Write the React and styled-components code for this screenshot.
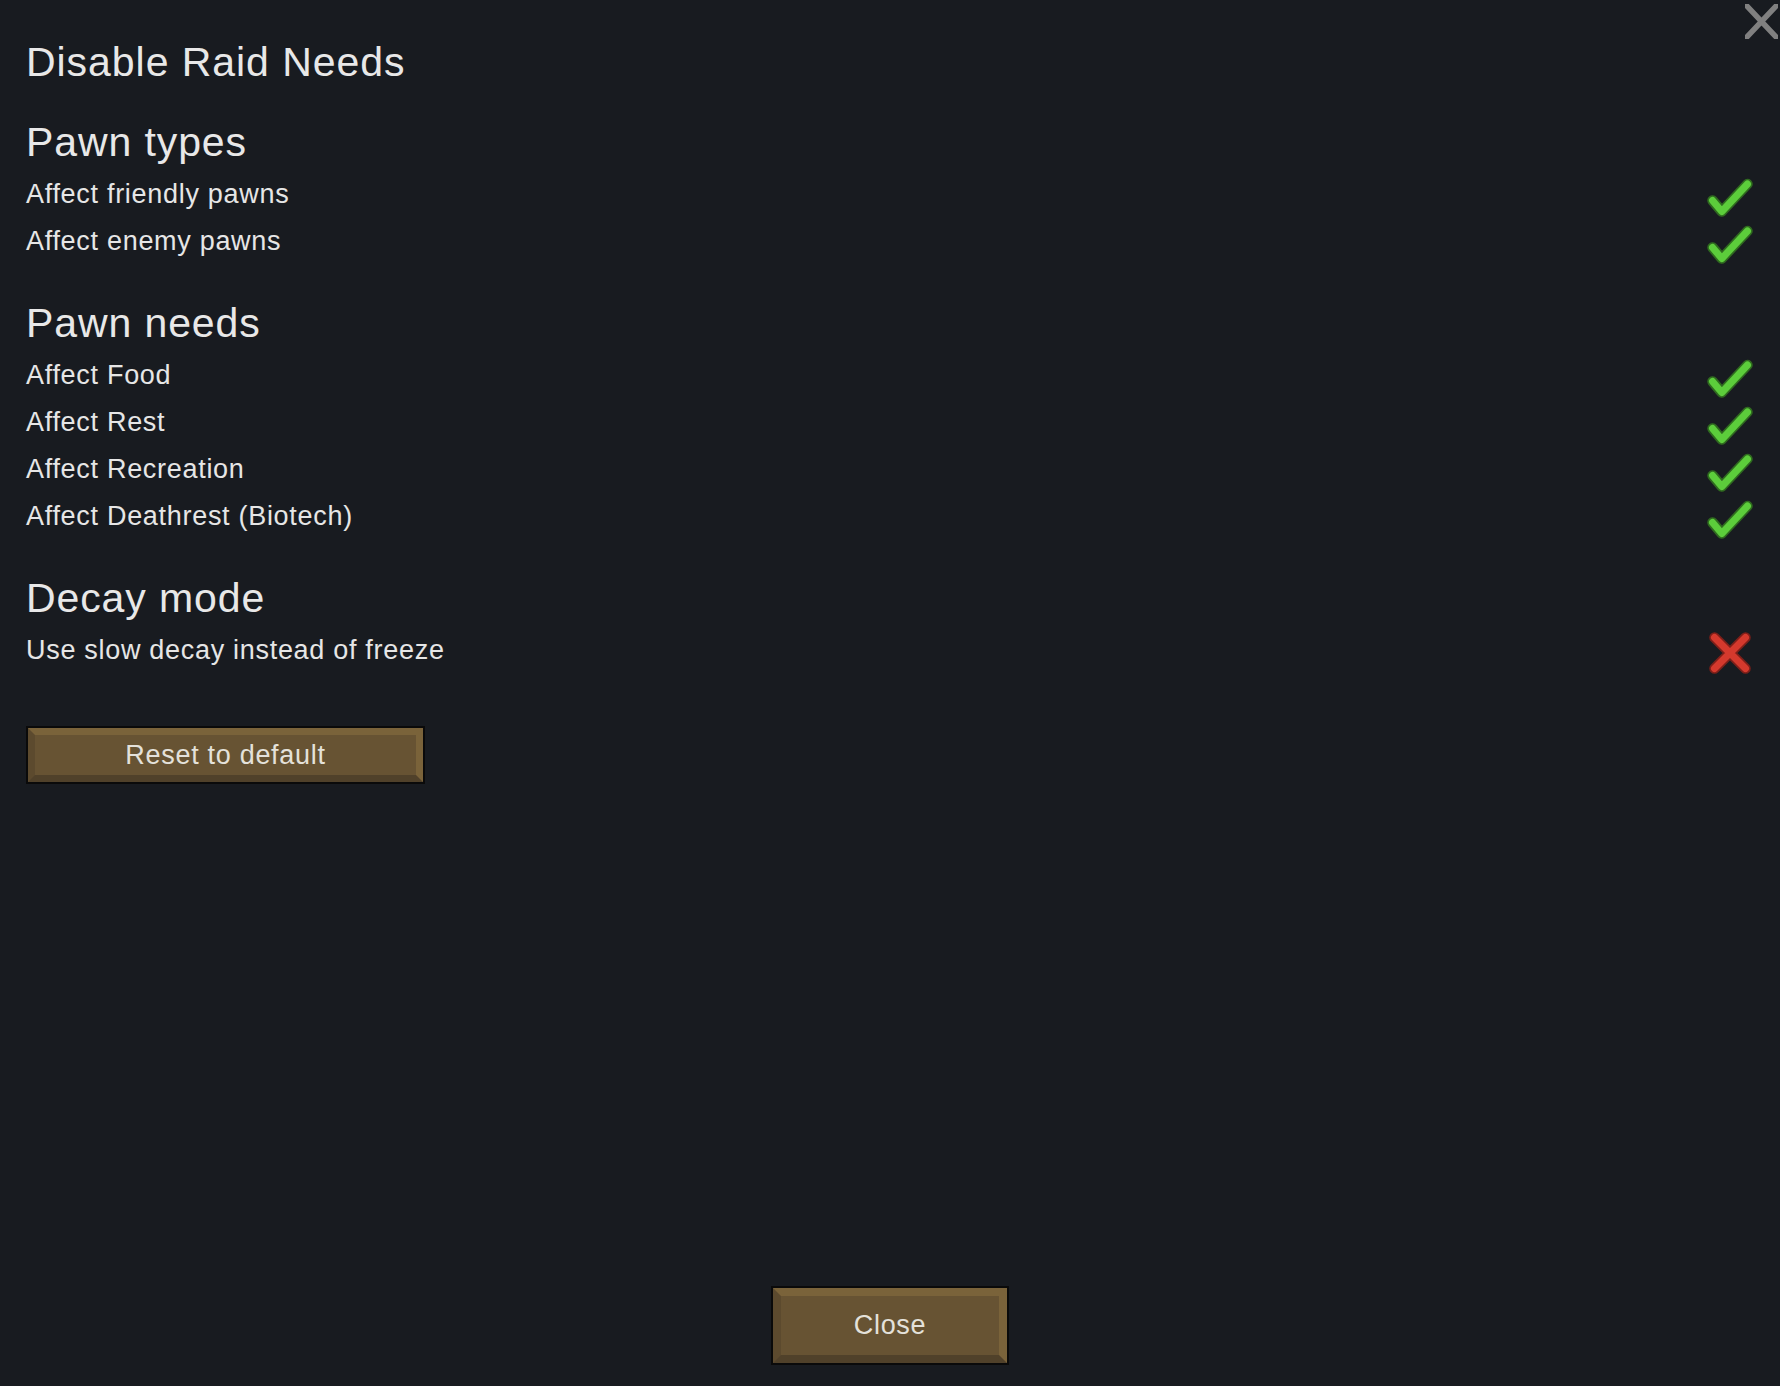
import React from "react";
import styled, { createGlobalStyle } from "styled-components";

const GlobalStyle = createGlobalStyle`
  html, body {
    margin: 0;
    padding: 0;
    background: #181b20;
  }
  body {
    font-family: "Liberation Sans", Arial, sans-serif;
    color: #e6e6e6;
  }
`;

// WINDOW
const Window = styled.div`
  position: relative;
  box-sizing: border-box;
  min-height: 100vh;
  padding: 33px 26px 21px 26px;
  display: flex;
  flex-direction: column;
  overflow: hidden;
`;

const CloseCross = styled.svg`
  position: absolute;
  top: 4px;
  right: 2px;
  width: 33px;
  height: 35px;
`;

const Title = styled.h1`
  margin: 0 0 22px 0;
  font-size: 41px;
  font-weight: 400;
  letter-spacing: 0.95px;
  line-height: 58px;
  color: #e8e8e8;
`;

// SECTIONS
const Section = styled.section`
  display: flex;
  flex-direction: column;
  margin-top: ${(props) => (props.first ? "0" : "29px")};
`;

const Heading = styled.h2`
  margin: 0;
  font-size: 41px;
  font-weight: 400;
  letter-spacing: 0.9px;
  line-height: 58px;
  color: #e8e8e8;
`;

const Row = styled.div`
  height: 47px;
  display: flex;
  align-items: center;
  justify-content: space-between;
`;

const Label = styled.span`
  font-size: 27px;
  letter-spacing: 0.7px;
  line-height: 47px;
  color: #e6e6e6;
`;

const Mark = styled.svg`
  width: 48px;
  height: 47px;
  flex-shrink: 0;
`;

// BUTTONS
const Button = styled.button`
  box-sizing: border-box;
  width: ${(props) => props.w}px;
  height: ${(props) => props.h}px;
  padding: 0;
  border: 2px solid #0a0a0a;
  background: #0a0a0a;
  display: flex;
  cursor: pointer;
`;

const Face = styled.span`
  flex: 1;
  display: flex;
  align-items: center;
  justify-content: center;
  border-style: solid;
  border-width: ${(props) => props.bevel}px;
  border-color: #7a633a #7a633a #50412a #5c4a2e;
  background: #675333;
  font-family: "Liberation Sans", Arial, sans-serif;
  font-size: 27px;
  letter-spacing: 0.7px;
  color: #e4e1da;
`;

const ResetWrap = styled.div`
  margin-top: 52px;
  display: flex;
`;

const Footer = styled.div`
  margin-top: auto;
  display: flex;
  justify-content: center;
`;

const Check = () => (
  <Mark viewBox="0 0 48 47">
    <polyline
      points="6.5,29.5 15.8,40.5 41.5,13"
      fill="none"
      stroke="#2f6a1f"
      strokeWidth="10.5"
      strokeLinecap="round"
      strokeLinejoin="round"
    />
    <polyline
      points="6.5,29.5 15.8,40.5 41.5,13"
      fill="none"
      stroke="#5ccd3b"
      strokeWidth="7"
      strokeLinecap="round"
      strokeLinejoin="round"
    />
  </Mark>
);

const Cross = () => (
  <Mark viewBox="0 0 48 47">
    <g fill="none" strokeLinecap="round">
      <path d="M8.5 10.5 L39.5 41.5 M39.5 10.5 L8.5 41.5" stroke="#7e1f19" strokeWidth="10.5" />
      <path d="M8.5 10.5 L39.5 41.5 M39.5 10.5 L8.5 41.5" stroke="#d4392d" strokeWidth="7" />
    </g>
  </Mark>
);

const sections = [
  {
    title: "Pawn types",
    options: [
      { label: "Affect friendly pawns", on: true },
      { label: "Affect enemy pawns", on: true },
    ],
  },
  {
    title: "Pawn needs",
    options: [
      { label: "Affect Food", on: true },
      { label: "Affect Rest", on: true },
      { label: "Affect Recreation", on: true },
      { label: "Affect Deathrest (Biotech)", on: true },
    ],
  },
  {
    title: "Decay mode",
    options: [{ label: "Use slow decay instead of freeze", on: false }],
  },
];

const App = () => {
  return (
    <>
      <GlobalStyle />
      <Window>
        <CloseCross viewBox="0 0 33 35">
          <path
            d="M-3 -3.2 L36 38.2 M36 -3.2 L-3 38.2"
            stroke="#808080"
            strokeWidth="5.5"
            fill="none"
          />
        </CloseCross>
        <Title>Disable Raid Needs</Title>
        {sections.map((s, i) => (
          <Section key={s.title} first={i === 0}>
            <Heading>{s.title}</Heading>
            {s.options.map((o) => (
              <Row key={o.label}>
                <Label>{o.label}</Label>
                {o.on ? <Check /> : <Cross />}
              </Row>
            ))}
          </Section>
        ))}
        <ResetWrap>
          <Button w={399} h={58}>
            <Face bevel={7}>Reset to default</Face>
          </Button>
        </ResetWrap>
        <Footer>
          <Button w={238} h={79}>
            <Face bevel={8}>Close</Face>
          </Button>
        </Footer>
      </Window>
    </>
  );
};

export default App;
